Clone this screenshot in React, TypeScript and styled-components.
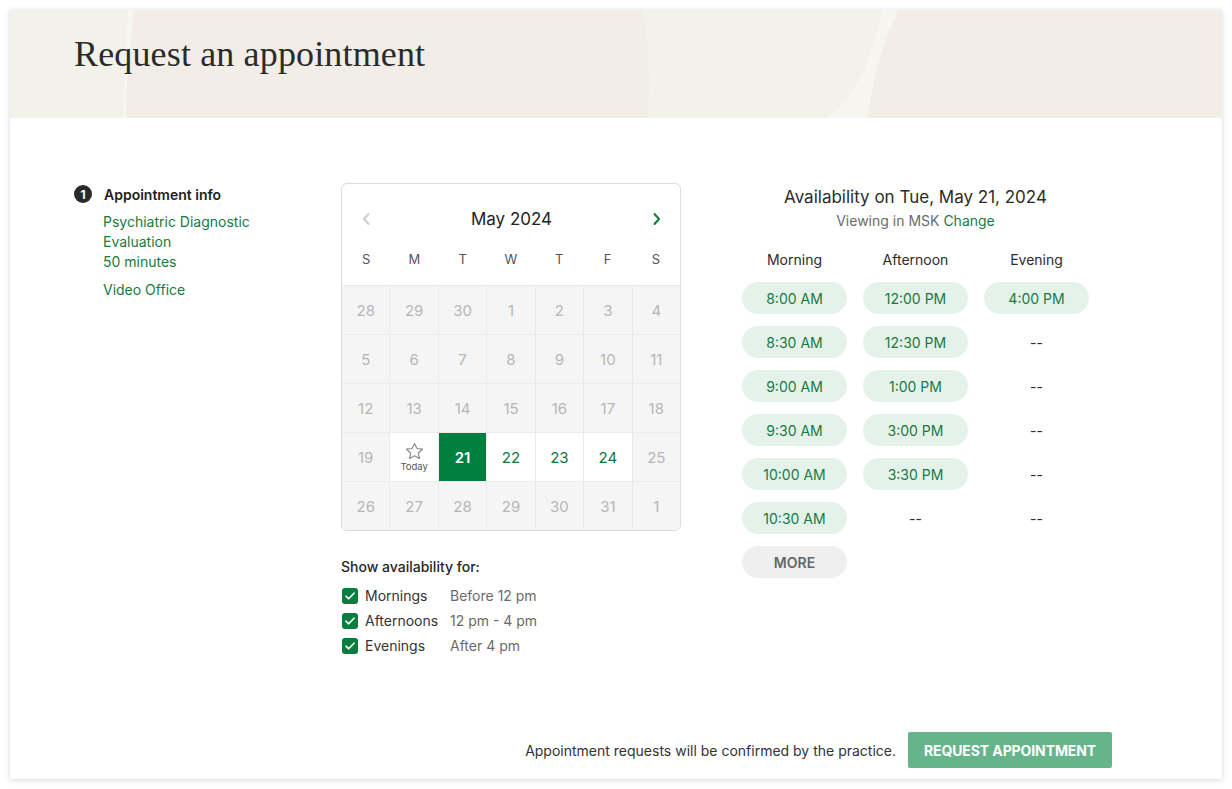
import React from "react";
import styled, { createGlobalStyle } from "styled-components";

const Global = createGlobalStyle`
  html, body { margin: 0; padding: 0; background: #ffffff; }
  body { padding: 10px; font-family: Inter, "Noto Sans", sans-serif; color: #333; }
  * { box-sizing: border-box; }
`;

const Card = styled.div`
  width: 1212px;
  height: 769px;
  background: #fff;
  box-shadow: 0 1px 6px rgba(0, 0, 0, 0.16);
  display: flex;
  flex-direction: column;
  overflow: hidden;
`;

const Header = styled.header`
  position: relative;
  height: 108px;
  padding: 22px 64px 0;
  background: #f2eee7;
  overflow: hidden;
`;

const HeaderArt = styled.svg`
  position: absolute;
  inset: 0;
  width: 100%;
  height: 100%;
`;

const Title = styled.h1`
  position: relative;
  margin: 0;
  font-family: "Liberation Serif", "DejaVu Serif", serif;
  font-weight: 400;
  font-size: 36px;
  letter-spacing: 0.15px;
  line-height: 44px;
  color: #2b2b2b;
`;

const Main = styled.main`
  display: flex;
  padding: 65px 0 0 64px;
`;

const InfoCol = styled.section`
  width: 267px;
  flex-shrink: 0;
`;

const StepRow = styled.div`
  display: flex;
  align-items: center;
  gap: 12px;
  height: 20px;
  margin-top: 1px;
`;

const StepNum = styled.span`
  width: 18px;
  height: 18px;
  border-radius: 50%;
  background: #2a2a2a;
  color: #fff;
  font-size: 12px;
  font-weight: 700;
  display: flex;
  align-items: center;
  justify-content: center;
`;

const StepTitle = styled.span`
  font-size: 14px;
  font-weight: 600;
  color: #222;
`;

const InfoBlock = styled.div`
  margin: 8px 0 0 29px;
  font-size: 14px;
  line-height: 20px;
  color: #187a44;
`;

const InfoLine = styled.div<{ $gap?: boolean }>`
  margin-top: ${(p) => (p.$gap ? "8px" : "0")};
`;

const CalCol = styled.section`
  width: 340px;
  flex-shrink: 0;
`;

const Calendar = styled.div`
  border: 1px solid #dcdde1;
  border-radius: 6px;
  overflow: hidden;
`;

const MonthRow = styled.div`
  display: flex;
  align-items: center;
  justify-content: space-between;
  height: 28px;
  margin-top: 21px;
  padding: 0 15px 0 16px;
`;

const MonthLabel = styled.span`
  font-size: 17px;
  color: #222;
`;

const NavBtn = styled.span<{ $active?: boolean }>`
  display: flex;
  width: 16px;
  justify-content: center;
  color: ${(p) => (p.$active ? "#0a7c3e" : "#cfcfcf")};
`;

const WeekRow = styled.div`
  display: grid;
  grid-template-columns: repeat(7, 1fr);
  margin-top: 13px;
  height: 26px;
  margin-bottom: 13px;
  align-items: center;
`;

const WeekDay = styled.span`
  text-align: center;
  font-size: 13px;
  color: #555;
`;

const Grid = styled.div`
  display: grid;
  grid-template-columns: repeat(7, 1fr);
  grid-auto-rows: 48px;
  gap: 1px;
  background: #ebebeb;
  border-top: 1px solid #ebebeb;
`;

type DayKind = "off" | "open" | "selected" | "today";

const Day = styled.div<{ $kind: DayKind }>`
  display: flex;
  flex-direction: column;
  align-items: center;
  justify-content: center;
  font-size: 15px;
  background: ${(p) =>
    p.$kind === "selected" ? "#007f3e" : p.$kind === "off" ? "#f5f5f5" : "#ffffff"};
  color: ${(p) =>
    p.$kind === "selected" ? "#ffffff" : p.$kind === "open" ? "#0d7540" : "#b7b7b7"};
  font-weight: ${(p) => (p.$kind === "selected" ? 600 : 400)};
`;

const TodayLabel = styled.span`
  font-size: 9.5px;
  color: #555;
  margin-top: 1px;
  line-height: 12px;
`;

const FilterTitle = styled.div`
  margin-top: 26px;
  font-size: 14px;
  line-height: 20px;
  font-weight: 500;
  color: #262626;
`;

const FilterList = styled.div`
  margin-top: 9px;
  display: grid;
  grid-template-columns: 16px 77px auto;
  column-gap: 8px;
  row-gap: 5px;
  align-items: center;
  font-size: 14px;
  line-height: 20px;
`;

const Check = styled.span`
  width: 16px;
  height: 16px;
  border-radius: 3px;
  background: #0a7c3e;
  display: flex;
  align-items: center;
  justify-content: center;
  margin-left: 1px;
`;

const FilterName = styled.span`
  color: #333;
`;

const FilterTime = styled.span`
  color: #6b6b6b;
`;

const AvailCol = styled.section`
  width: 347px;
  margin-left: 61px;
  flex-shrink: 0;
`;

const AvailTitle = styled.h2`
  margin: 0;
  text-align: center;
  font-size: 17px;
  font-weight: 400;
  line-height: 26px;
  color: #2b2b2b;
  padding-top: 1px;
`;

const AvailSub = styled.div`
  margin-top: 1px;
  text-align: center;
  font-size: 14px;
  line-height: 20px;
  color: #6b6b6b;
`;

const ChangeLink = styled.span`
  color: #187a44;
`;

const Slots = styled.div`
  margin-top: 20px;
  display: grid;
  grid-template-columns: repeat(3, 105px);
  column-gap: 16px;
`;

const SlotCol = styled.div`
  display: flex;
  flex-direction: column;
  gap: 12px;
`;

const SlotHead = styled.div`
  text-align: center;
  font-size: 14px;
  line-height: 18px;
  color: #2b2b2b;
  margin-bottom: 1px;
`;

type SlotKind = "time" | "empty" | "more";

const Slot = styled.div<{ $kind: SlotKind }>`
  height: 32px;
  border-radius: 16px;
  display: flex;
  align-items: center;
  justify-content: center;
  font-size: 14px;
  background: ${(p) =>
    p.$kind === "time" ? "#e4f2ea" : p.$kind === "more" ? "#efefef" : "transparent"};
  color: ${(p) =>
    p.$kind === "time" ? "#187a44" : p.$kind === "more" ? "#666" : "#2b2b2b"};
  font-weight: ${(p) => (p.$kind === "more" ? 600 : 400)};
`;

const Footer = styled.footer`
  margin-top: auto;
  display: flex;
  justify-content: flex-end;
  align-items: center;
  gap: 12px;
  padding: 0 110px 11px 0;
`;

const FooterNote = styled.span`
  font-size: 14px;
  color: #333;
`;

const SubmitBtn = styled.button`
  height: 36px;
  width: 204px;
  border: none;
  border-radius: 2px;
  background: #66b48a;
  color: #fff;
  font-family: Inter, "Noto Sans", sans-serif;
  font-size: 14px;
  font-weight: 700;
  letter-spacing: -0.1px;
  text-transform: uppercase;
`;

const Chevron = ({ dir }: { dir: "left" | "right" }) => (
  <svg width="10" height="14" viewBox="0 0 10 14" fill="none">
    <path
      d={dir === "left" ? "M7.5 2 L3 7 L7.5 12" : "M2.5 2 L7 7 L2.5 12"}
      stroke="currentColor"
      strokeWidth="2"
      strokeLinecap="round"
      strokeLinejoin="round"
    />
  </svg>
);

const Star = () => (
  <svg width="19" height="18" viewBox="0 0 24 23" fill="none">
    <path
      d="M12 1.8l3.1 6.5 7.1.9-5.2 4.9 1.3 7-6.3-3.4-6.3 3.4 1.3-7L1.8 9.2l7.1-.9z"
      stroke="#8a8a8a"
      strokeWidth="1.5"
      strokeLinejoin="round"
    />
  </svg>
);

const CheckMark = () => (
  <svg width="10" height="8" viewBox="0 0 10 8" fill="none">
    <path d="M1 4.2 L3.7 6.8 L9 1.2" stroke="#fff" strokeWidth="1.6" strokeLinecap="round" strokeLinejoin="round" />
  </svg>
);

const weeks: [string, DayKind][][] = [
  ["28", "29", "30", "1", "2", "3", "4"].map((d) => [d, "off"] as [string, DayKind]),
  ["5", "6", "7", "8", "9", "10", "11"].map((d) => [d, "off"] as [string, DayKind]),
  ["12", "13", "14", "15", "16", "17", "18"].map((d) => [d, "off"] as [string, DayKind]),
  [
    ["19", "off"],
    ["20", "today"],
    ["21", "selected"],
    ["22", "open"],
    ["23", "open"],
    ["24", "open"],
    ["25", "off"],
  ],
  ["26", "27", "28", "29", "30", "31", "1"].map((d) => [d, "off"] as [string, DayKind]),
];

const slotCols: { head: string; slots: [string, SlotKind][] }[] = [
  {
    head: "Morning",
    slots: [
      ["8:00 AM", "time"],
      ["8:30 AM", "time"],
      ["9:00 AM", "time"],
      ["9:30 AM", "time"],
      ["10:00 AM", "time"],
      ["10:30 AM", "time"],
      ["MORE", "more"],
    ],
  },
  {
    head: "Afternoon",
    slots: [
      ["12:00 PM", "time"],
      ["12:30 PM", "time"],
      ["1:00 PM", "time"],
      ["3:00 PM", "time"],
      ["3:30 PM", "time"],
      ["--", "empty"],
    ],
  },
  {
    head: "Evening",
    slots: [
      ["4:00 PM", "time"],
      ["--", "empty"],
      ["--", "empty"],
      ["--", "empty"],
      ["--", "empty"],
      ["--", "empty"],
    ],
  },
];

const filters = [
  ["Mornings", "Before 12 pm"],
  ["Afternoons", "12 pm - 4 pm"],
  ["Evenings", "After 4 pm"],
];

export default function App() {
  return (
    <>
      <Global />
      <Card>
        <Header>
          <HeaderArt viewBox="0 0 1212 108" preserveAspectRatio="none">
            <path d="M0 0 H120 C117 40 114 80 113 108 H0 Z" fill="#f3f2ea" />
            <path d="M118 0 H124 C119 40 116 80 116 108 H113 C114 80 117 40 118 0 Z" fill="#f7f6f1" />
            <path d="M632 0 H888 C874 40 862 75 850 108 H638 C640 70 640 35 632 0 Z" fill="#f3f2ea" />
            <path d="M872 0 H888 C872 40 862 75 858 108 H815 C845 90 862 50 872 0 Z" fill="#f6f5ef" />
            <path d="M888 0 H1212 V108 H858 C862 70 872 35 888 0 Z" fill="#f2eee7" />
          </HeaderArt>
          <Title>Request an appointment</Title>
        </Header>
        <Main>
          <InfoCol>
            <StepRow>
              <StepNum>1</StepNum>
              <StepTitle>Appointment info</StepTitle>
            </StepRow>
            <InfoBlock>
              <InfoLine>Psychiatric Diagnostic</InfoLine>
              <InfoLine>Evaluation</InfoLine>
              <InfoLine>50 minutes</InfoLine>
              <InfoLine $gap>Video Office</InfoLine>
            </InfoBlock>
          </InfoCol>
          <CalCol>
            <Calendar>
              <MonthRow>
                <NavBtn>
                  <Chevron dir="left" />
                </NavBtn>
                <MonthLabel>May 2024</MonthLabel>
                <NavBtn $active>
                  <Chevron dir="right" />
                </NavBtn>
              </MonthRow>
              <WeekRow>
                {["S", "M", "T", "W", "T", "F", "S"].map((d, i) => (
                  <WeekDay key={i}>{d}</WeekDay>
                ))}
              </WeekRow>
              <Grid>
                {weeks.flat().map(([d, kind], i) => (
                  <Day key={i} $kind={kind}>
                    {kind === "today" ? (
                      <>
                        <Star />
                        <TodayLabel>Today</TodayLabel>
                      </>
                    ) : (
                      d
                    )}
                  </Day>
                ))}
              </Grid>
            </Calendar>
            <FilterTitle>Show availability for:</FilterTitle>
            <FilterList>
              {filters.map(([name, time]) => (
                <React.Fragment key={name}>
                  <Check>
                    <CheckMark />
                  </Check>
                  <FilterName>{name}</FilterName>
                  <FilterTime>{time}</FilterTime>
                </React.Fragment>
              ))}
            </FilterList>
          </CalCol>
          <AvailCol>
            <AvailTitle>Availability on Tue, May 21, 2024</AvailTitle>
            <AvailSub>
              Viewing in MSK <ChangeLink>Change</ChangeLink>
            </AvailSub>
            <Slots>
              {slotCols.map((col) => (
                <SlotCol key={col.head}>
                  <SlotHead>{col.head}</SlotHead>
                  {col.slots.map(([label, kind], i) => (
                    <Slot key={i} $kind={kind}>
                      {label}
                    </Slot>
                  ))}
                </SlotCol>
              ))}
            </Slots>
          </AvailCol>
        </Main>
        <Footer>
          <FooterNote>Appointment requests will be confirmed by the practice.</FooterNote>
          <SubmitBtn>Request appointment</SubmitBtn>
        </Footer>
      </Card>
    </>
  );
}
